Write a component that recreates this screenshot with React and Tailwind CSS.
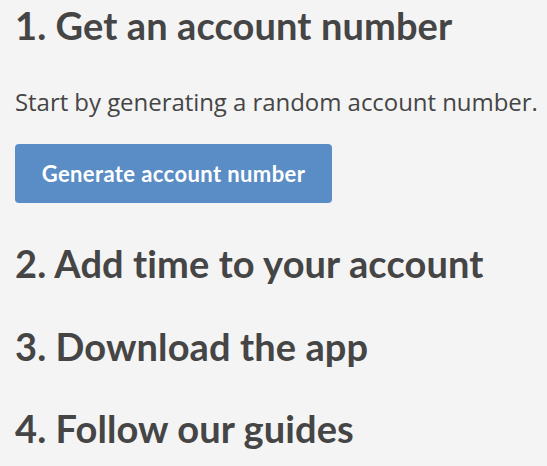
function Heading({ children, className = "" }) {
  return (
    <h2 className={`font-['Lato',sans-serif] font-bold text-[38px] leading-[48px] whitespace-nowrap tracking-[0.1px] ${className}`}>
      {children}
    </h2>
  );
}

export default function App() {
  return (
    <div className="bg-[#f4f4f4] min-h-[466px] text-[#454545] px-[15px] pt-px overflow-hidden">
      <Heading>1. Get an account number</Heading>
      <p className="mt-[37px] font-['Open_Sans',sans-serif] text-[24px] leading-[32px] whitespace-nowrap tracking-[-0.05px]">
        Start by generating a random account number.
      </p>
      <button
        type="button"
        className="mt-[26px] flex h-[59px] w-[317px] items-center justify-center rounded-[4px] bg-[#5a8dc5] font-['Lato',sans-serif] text-[22px] tracking-[0.4px] font-bold text-white"
      >
        Generate account number
      </button>
      <Heading className="mt-[36px]">2. Add time to your account</Heading>
      <Heading className="mt-[35px]">3. Download the app</Heading>
      <Heading className="mt-[34px]">4. Follow our guides</Heading>
    </div>
  );
}
